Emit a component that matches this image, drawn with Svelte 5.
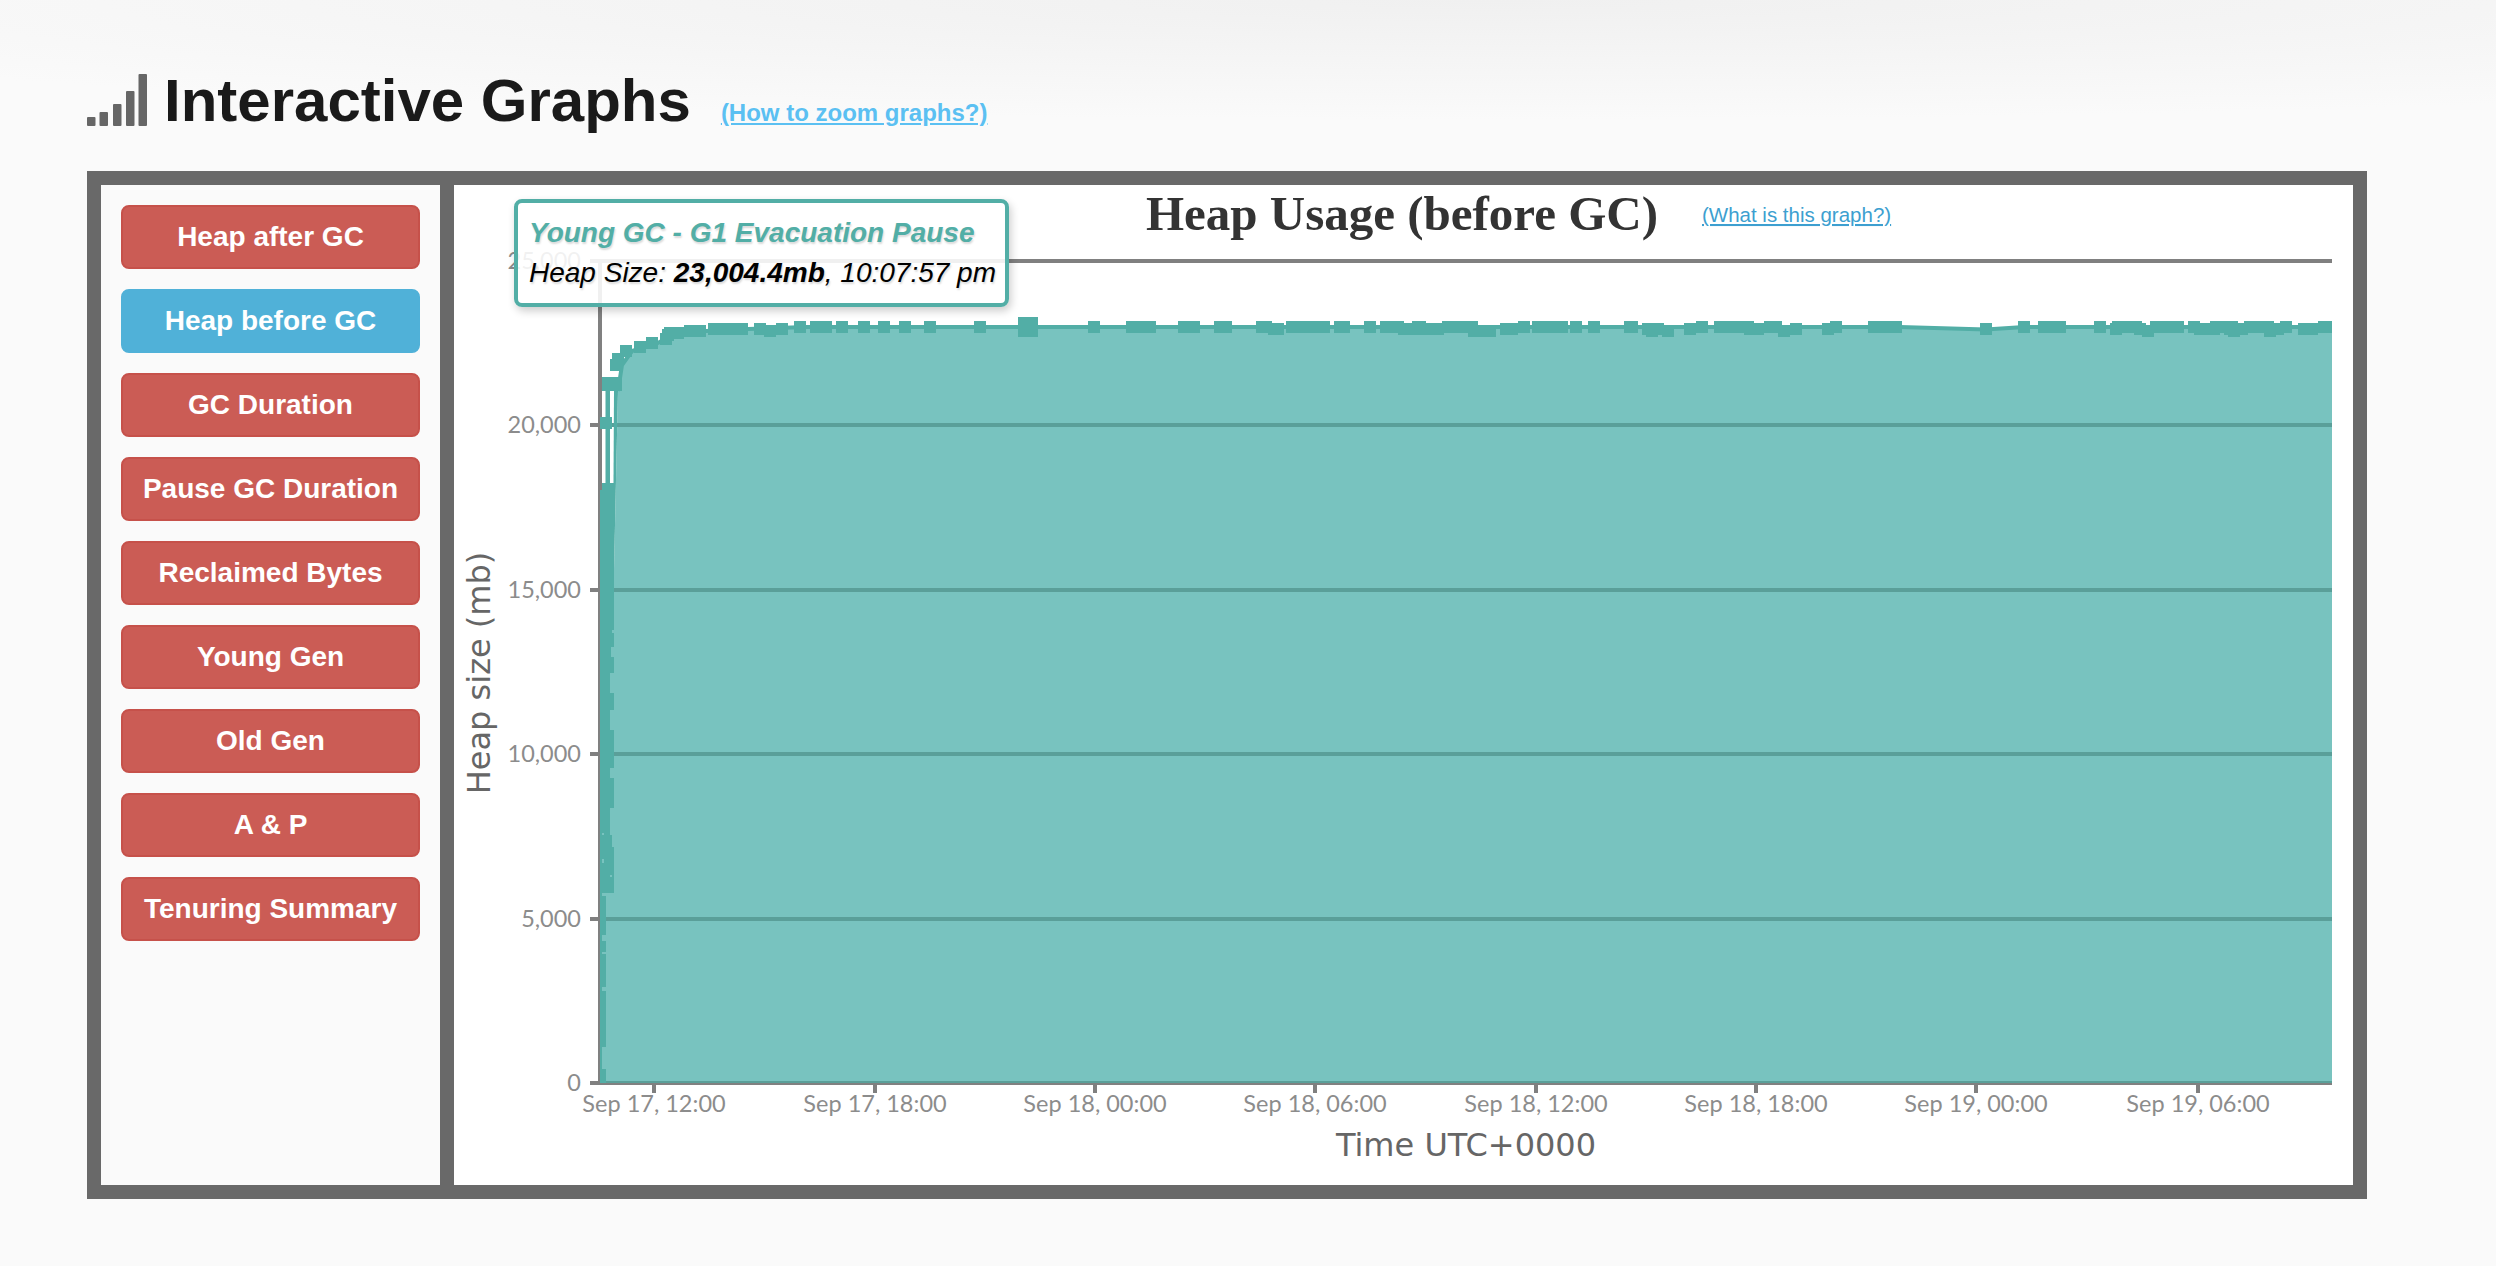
<script>
  const buttons = ['Heap after GC', 'Heap before GC', 'GC Duration', 'Pause GC Duration', 'Reclaimed Bytes', 'Young Gen', 'Old Gen', 'A & P', 'Tenuring Summary'];
  const yTicks = [
    { v: '25,000', y: 261 }, { v: '20,000', y: 425 }, { v: '15,000', y: 590 },
    { v: '10,000', y: 754 }, { v: '5,000', y: 919 }, { v: '0', y: 1083 }
  ];
  const xTicks = [
    { t: 'Sep 17, 12:00', x: 654 }, { t: 'Sep 17, 18:00', x: 875 }, { t: 'Sep 18, 00:00', x: 1095 },
    { t: 'Sep 18, 06:00', x: 1315 }, { t: 'Sep 18, 12:00', x: 1536 }, { t: 'Sep 18, 18:00', x: 1756 },
    { t: 'Sep 19, 00:00', x: 1976 }, { t: 'Sep 19, 06:00', x: 2198 }
  ];
  // marker runs: x start, x end, y centre
  const runs = [
    [610,622,365],[612,624,359],[620,632,351],[634,646,347],[646,658,343],[660,672,339],[662,674,335],[664,684,333],
    [684,706,331],[708,748,329],[754,766,329],[764,776,331],[776,788,329],[794,806,327],[810,832,327],[836,848,327],
    [858,870,327],[878,890,327],[899,911,327],[924,936,327],[974,986,327],[1018,1038,327,20],
    [1088,1100,327],[1126,1156,327],[1178,1200,327],[1214,1232,327],[1256,1272,327],[1268,1284,329],[1286,1330,327],
    [1334,1350,327],[1364,1376,327],[1380,1404,327],[1398,1444,329],[1412,1426,327],[1442,1478,327],[1468,1496,331],
    [1500,1518,329],[1518,1530,327],[1532,1568,327],[1570,1582,327],[1588,1600,327],[1624,1638,327],[1642,1664,329],
    [1646,1658,331],[1662,1674,331],[1684,1696,329],[1696,1708,327],[1714,1754,327],[1744,1764,329],[1764,1782,327],
    [1778,1790,331],[1790,1802,329],[1822,1834,329],[1830,1842,327],[1868,1902,327],[1980,1992,329],[2018,2030,327],
    [2038,2066,327],[2094,2106,327],[2112,2142,327],[2110,2122,329],[2134,2146,329],[2142,2154,331],[2150,2184,327],
    [2188,2200,327],[2194,2220,329],[2210,2238,327],[2224,2236,329],[2228,2240,331],[2238,2248,329],[2244,2274,327],
    [2264,2276,331],[2274,2284,329],[2280,2292,327],[2298,2318,329],[2318,2332,327]
  ];
  const marks = runs.map(([a, b, c, h = 12]) => ({ x: a, y: c - h / 2, w: b - a, h }));
  const stem = [
    [602,377,20,14],[605.5,391,4.5,92],[600,417,12,12],[602,483,12,7],[600,490,14,403],[600,893,6,190]
  ].map(([x, y, w, h]) => ({ x, y, w, h }));
  const notches = [
    [612,630,2,3],[611,647,3,10],[610,673,4,20],[610,710,4,20],[610,768,4,10],[610,808,4,27],[612,835,2,12],
    [602,833,2,2],[602,859,2,4],[610,875,2,2],[602,893,4,3],[602,935,4,6],[602,952,4,2],[602,987,4,4],[602,1047,4,22]
  ].map(([x, y, w, h]) => ({ x, y, w, h }));
  const area = 'M606 1083V893H614V570L618 391L622 365L632 351L658 343L672 335L706 331L748 329L806 327H1900L1986 329.5L2024 327H2332V1083Z';
  const line = 'M618 391L622 365L632 351L658 343L672 335L706 331L748 329L806 327H1900L1986 329.5L2024 327H2332';
</script>

<div class="page">
  <header class="head">
    <svg class="bars" viewBox="0 0 60 52" width="60" height="52" aria-hidden="true">
      <rect x="0" y="43" width="8.5" height="9" rx="1" />
      <rect x="12.5" y="38" width="8.5" height="14" rx="1" />
      <rect x="26" y="30" width="8.5" height="22" rx="1" />
      <rect x="39" y="17" width="8.5" height="35" rx="1" />
      <rect x="51.5" y="0" width="8.5" height="52" rx="1" />
    </svg>
    <h1>Interactive Graphs</h1>
    <a class="help" href="#zoom">(How to zoom graphs?)</a>
  </header>

  <section class="panel">
    <nav class="side">
      {#each buttons as b, i}
        <button class="btn" class:active={i === 1}>{b}</button>
      {/each}
    </nav>
    <div class="chart">
      <svg viewBox="454 185 1899 1000" width="1899" height="1000">
        <text x="1402" y="230" class="title" text-anchor="middle">Heap Usage (before GC)</text>
        <a href="#what"><text x="1702" y="222" class="what">(What is this graph?)</text></a>

        {#each yTicks as t}
          <rect x="590" y={t.y - 2} width="1742" height="4" fill="#808080" />
          <text x="581" y={t.y + 8} class="lab" text-anchor="end">{t.v}</text>
        {/each}
        <rect x="598" y="261" width="4" height="824" fill="#808080" />
        {#each xTicks as t}
          <rect x={t.x - 2} y="1083" width="4" height="10" fill="#808080" />
          <text x={t.x} y="1112" class="lab" text-anchor="middle">{t.t}</text>
        {/each}

        <path d={area} fill="#78c3bf" />
        {#each yTicks.slice(1, 5) as t}
          <rect x="606" y={t.y - 2} width="1726" height="4" fill="#5a9f99" />
        {/each}
        <rect x="606" y="1081" width="1726" height="2" fill="#5a9f99" />

        <path d={line} fill="none" stroke="#52aea6" stroke-width="4" />
        <path d="M614 391H618L614 570H613Z" fill="#52aea6" />
        {#each stem as r}
          <rect x={r.x} y={r.y} width={r.w} height={r.h} fill="#52aea6" />
        {/each}
        {#each notches as r}
          <rect x={r.x} y={r.y} width={r.w} height={r.h} fill="#78c3bf" />
        {/each}
        {#each marks as r}
          <rect x={r.x} y={r.y} width={r.w} height={r.h} fill="#52aea6" />
        {/each}

        <text x="1466" y="1156" class="axis" text-anchor="middle">Time UTC+0000</text>
        <text transform="translate(490 673) rotate(-90)" class="axis" text-anchor="middle">Heap size (mb)</text>
      </svg>
      <div class="tip">
        <div class="tip-title">Young GC - G1 Evacuation Pause</div>
        <div class="tip-body">Heap Size: <b>23,004.4mb</b>, 10:07:57 pm</div>
      </div>
    </div>
  </section>
</div>

<style>
  :global(body) {
    margin: 0;
    background: #fafafa;
  }
  .page {
    box-sizing: border-box;
    height: 1266px;
    overflow: hidden;
    padding: 70px 129px 0 87px;
    font-family: "Liberation Sans", Arial, sans-serif;
    background: radial-gradient(ellipse 2000px 120px at 60% 0, #f0f0f0, #fafafa);
  }
  .head {
    display: flex;
    align-items: flex-end;
    height: 61px;
  }
  .bars {
    display: block;
    fill: #666;
    margin-bottom: 5px;
    margin-right: 17px;
  }
  h1 {
    margin: 0;
    font-size: 60px;
    line-height: 60px;
    font-weight: 700;
    color: #1a1a1a;
    margin-right: 30px;
  }
  .help {
    font-size: 24px;
    line-height: 26px;
    font-weight: 700;
    color: #5bc0f2;
    margin-bottom: 5px;
  }
  .panel {
    box-sizing: border-box;
    display: grid;
    grid-template-columns: 339px 1899px;
    gap: 14px;
    width: 2280px;
    height: 1028px;
    margin-top: 40px;
    padding: 14px;
    background: #696969;
  }
  .side {
    display: flex;
    flex-direction: column;
    gap: 20px;
    padding: 20px;
    background: #fafafa;
  }
  .btn {
    height: 64px;
    padding: 0;
    border: 2px solid #c6514a;
    border-radius: 8px;
    background: #cb5c55;
    color: #fff;
    font: 700 28px "Liberation Sans", Arial, sans-serif;
  }
  .btn.active {
    background: #50b1d8;
    border-color: #50b1d8;
  }
  .chart {
    position: relative;
    background: #fff;
  }
  .chart svg {
    display: block;
  }
  .title {
    font: 700 49px "Liberation Serif", serif;
    fill: #333;
  }
  .what {
    font: 400 20.5px "Liberation Sans", Arial, sans-serif;
    fill: #3d9fd0;
    text-decoration: underline;
  }
  .lab {
    font: 400 23.5px Lato, sans-serif;
    fill: #8c8c8c;
  }
  .axis {
    font: 400 32px "DejaVu Sans", sans-serif;
    fill: #666;
  }
  .tip {
    position: absolute;
    left: 60px;
    top: 14px;
    box-sizing: border-box;
    width: 495px;
    height: 108px;
    padding: 10px 11px;
    border: 4px solid #52aea6;
    border-radius: 8px;
    background: rgba(255, 255, 255, 0.88);
    box-shadow: 2px 4px 8px rgba(0, 0, 0, 0.2);
    font-style: italic;
    font-size: 28px;
    line-height: 40px;
    white-space: nowrap;
    text-shadow: 1px 2px 2px rgba(0, 0, 0, 0.15);
  }
  .tip-title {
    font-weight: 700;
    color: #52aea6;
  }
  .tip-body {
    color: #000;
  }
</style>
